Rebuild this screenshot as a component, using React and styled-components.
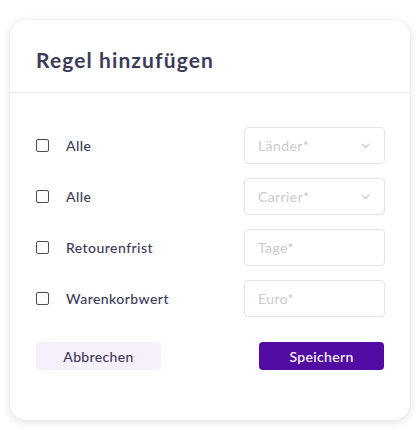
import React from "react";
import styled, { createGlobalStyle } from "styled-components";

const Global = createGlobalStyle`
  html, body { margin: 0; padding: 0; background: #ffffff; }
  body { font-family: Lato, "Noto Sans", sans-serif; }
  * { box-sizing: border-box; }
`;

const Page = styled.div`
  padding: 20px 10px;
`;

const Card = styled.div`
  width: 400px;
  height: 400px;
  background: #fff;
  border-radius: 16px;
  box-shadow: 0 2px 8px rgba(40, 40, 70, 0.14), 0 0 2px rgba(40, 40, 70, 0.06);
  display: flex;
  flex-direction: column;
`;

const Header = styled.div`
  height: 73px;
  padding: 0 26px;
  display: flex;
  align-items: center;
  border-bottom: 1.5px solid #e9e8ef;
`;

const Title = styled.h2`
  margin: 0;
  padding-top: 6px;
  font-size: 21px;
  font-weight: 700;
  color: #3d3b58;
  letter-spacing: 1.1px;
`;

const Body = styled.div`
  padding: 34px 25px 0 26px;
  display: flex;
  flex-direction: column;
  gap: 14px;
`;

const Row = styled.div`
  height: 37px;
  display: flex;
  align-items: center;
`;

const Check = styled.span`
  width: 13px;
  height: 13px;
  border: 1.5px solid #4a4863;
  border-radius: 2px;
  flex: none;
`;

const Label = styled.span`
  margin-left: 17px;
  font-size: 14px;
  font-weight: 500;
  color: #3d3b58;
  letter-spacing: 0.45px;
  flex: 1;
`;

const Field = styled.div`
  width: 141px;
  height: 37px;
  border: 1px solid #e3e3e8;
  border-radius: 4px;
  display: flex;
  align-items: center;
  justify-content: space-between;
  padding: 0 14px 0 13px;
  font-size: 14px;
  letter-spacing: 0.4px;
  color: #c9c9ce;
`;

const Chevron = styled.svg`
  width: 9px;
  height: 6px;
`;

const Actions = styled.div`
  margin-top: 11px;
  display: flex;
  justify-content: space-between;
  padding-right: 1px;
`;

const Button = styled.button`
  width: 125px;
  height: 28px;
  border: none;
  border-radius: 4px;
  font-family: Lato, "Noto Sans", sans-serif;
  font-size: 14px;
  font-weight: 500;
  letter-spacing: 0.35px;
  background: ${(p) => (p.$primary ? "#520ca3" : "#f5f0fc")};
  color: ${(p) => (p.$primary ? "#ffffff" : "#3d3b58")};
  padding: 0;
`;

const rows = [
  { label: "Alle", ph: "Länder*", select: true },
  { label: "Alle", ph: "Carrier*", select: true },
  { label: "Retourenfrist", ph: "Tage*" },
  { label: "Warenkorbwert", ph: "Euro*" },
];

export default function App() {
  return (
    <Page>
      <Global />
      <Card>
        <Header>
          <Title>Regel hinzufügen</Title>
        </Header>
        <Body>
          {rows.map((r, i) => (
            <Row key={i}>
              <Check />
              <Label>{r.label}</Label>
              <Field>
                <span>{r.ph}</span>
                {r.select && (
                  <Chevron viewBox="0 0 9 6">
                    <path d="M1 1.2 L4.5 4.5 L8 1.2" fill="none" stroke="#c4c4ca" strokeWidth="1.1" strokeLinecap="round" />
                  </Chevron>
                )}
              </Field>
            </Row>
          ))}
          <Actions>
            <Button>Abbrechen</Button>
            <Button $primary>Speichern</Button>
          </Actions>
        </Body>
      </Card>
    </Page>
  );
}
